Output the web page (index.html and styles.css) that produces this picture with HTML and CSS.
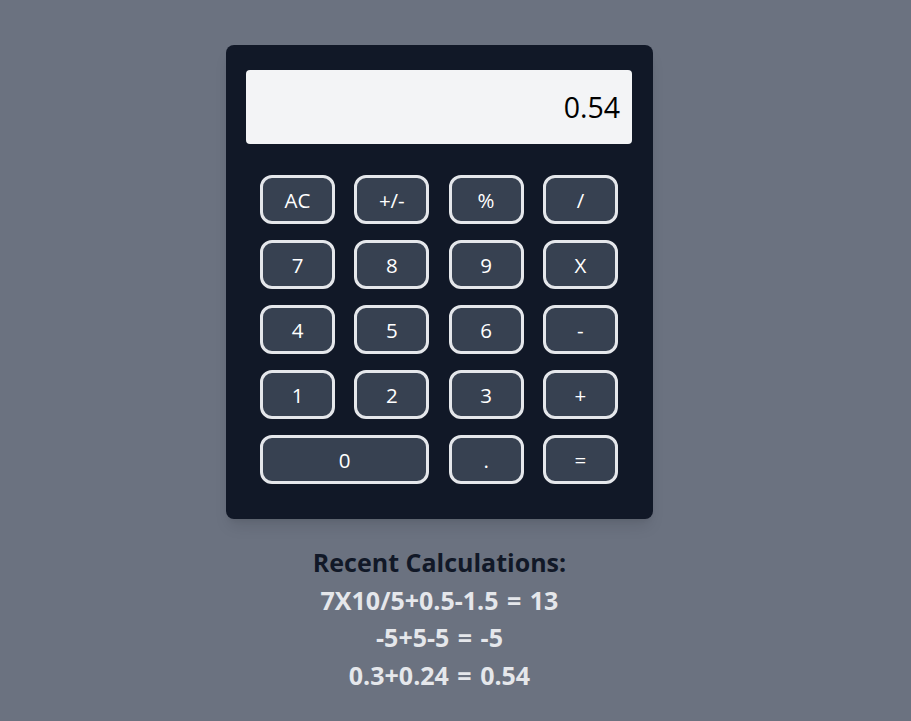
FILE: index.html
```html
<!DOCTYPE html>
<html>
<head>
<meta charset="utf-8">
<link rel="stylesheet" href="styles.css">
</head>
<body>
<div class="page">
  <div class="calc">
    <div class="display">0.54</div>
    <div class="keys">
      <button class="key">AC</button>
      <button class="key">+/-</button>
      <button class="key">%</button>
      <button class="key">/</button>
      <button class="key">7</button>
      <button class="key">8</button>
      <button class="key">9</button>
      <button class="key">X</button>
      <button class="key">4</button>
      <button class="key">5</button>
      <button class="key">6</button>
      <button class="key">-</button>
      <button class="key">1</button>
      <button class="key">2</button>
      <button class="key">3</button>
      <button class="key">+</button>
      <button class="key wide">0</button>
      <button class="key">.</button>
      <button class="key">=</button>
    </div>
  </div>
  <div class="recent">
    <div class="recent-title">Recent Calculations:</div>
    <div class="recent-item">7X10/5+0.5-1.5 = 13</div>
    <div class="recent-item">-5+5-5 = -5</div>
    <div class="recent-item">0.3+0.24 = 0.54</div>
  </div>
</div>
</body>
</html>
```
FILE: styles.css
```css
html, body {
  margin: 0;
  padding: 0;
  background: #6b7280;
  font-family: "Open Sans", "Noto Sans", sans-serif;
}
.page {
  width: 879px;
  padding-top: 45px;
  display: flex;
  flex-direction: column;
  align-items: center;
}
.calc {
  width: 427px;
  box-sizing: border-box;
  background: #111827;
  border-radius: 8px;
  padding: 25px 21px 35px 20px;
  box-shadow: 0 10px 15px -3px rgba(0,0,0,0.1), 0 4px 6px -4px rgba(0,0,0,0.1);
}
.display {
  height: 74px;
  box-sizing: border-box;
  background: #f3f4f6;
  border-radius: 4px;
  color: #000;
  font-size: 28.5px;
  font-weight: 500;
  line-height: 74px;
  text-align: right;
  padding-right: 12px;
}
.keys {
  margin: 31px 14px 0 14px;
  display: grid;
  grid-template-columns: repeat(4, 75px);
  column-gap: 19.3px;
  row-gap: 16px;
}
.key {
  height: 49px;
  box-sizing: border-box;
  background: #374151;
  border: 3px solid #e5e7eb;
  border-radius: 12px;
  color: #fff;
  font-family: "Open Sans", "Noto Sans", sans-serif;
  font-size: 20.5px;
  padding: 0;
}
.key.wide {
  grid-column: span 2;
}
.recent {
  margin-top: 25px;
  text-align: center;
  font-weight: bold;
  font-size: 25px;
  line-height: 37.5px;
}
.recent-title {
  color: #111827;
}
.recent-item {
  color: #e5e7eb;
  word-spacing: 2px;
}
```
